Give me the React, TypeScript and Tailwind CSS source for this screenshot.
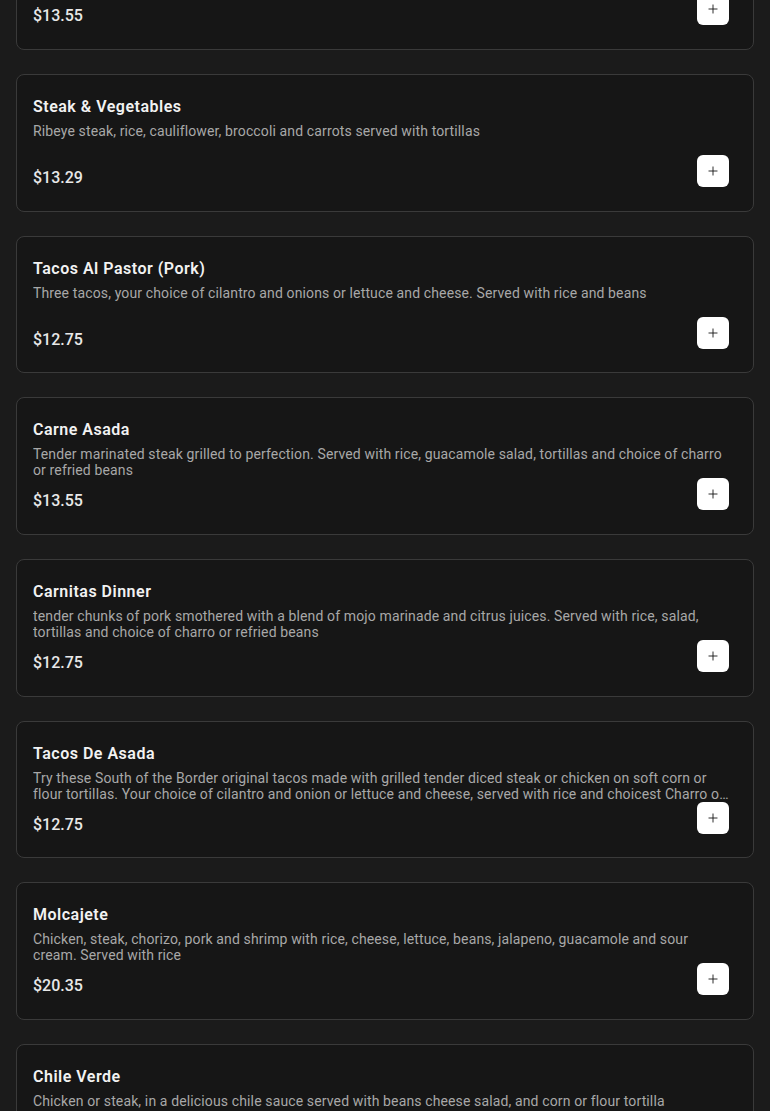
import { Plus } from "lucide-react"

interface Item {
  name: string
  description: string
  price: string
}

const items: Item[] = [
  { name: "Fajitas", description: "Sizzling fajitas served with rice, beans and tortillas", price: "$13.55" },
  { name: "Steak & Vegetables", description: "Ribeye steak, rice, cauliflower, broccoli and carrots served with tortillas", price: "$13.29" },
  { name: "Tacos Al Pastor (Pork)", description: "Three tacos, your choice of cilantro and onions or lettuce and cheese. Served with rice and beans", price: "$12.75" },
  { name: "Carne Asada", description: "Tender marinated steak grilled to perfection. Served with rice, guacamole salad, tortillas and choice of charro or refried beans", price: "$13.55" },
  { name: "Carnitas Dinner", description: "tender chunks of pork smothered with a blend of mojo marinade and citrus juices. Served with rice, salad, tortillas and choice of charro or refried beans", price: "$12.75" },
  { name: "Tacos De Asada", description: "Try these South of the Border original tacos made with grilled tender diced steak or chicken on soft corn or flour tortillas. Your choice of cilantro and onion or lettuce and cheese, served with rice and choicest Charro or refried beans", price: "$12.75" },
  { name: "Molcajete", description: "Chicken, steak, chorizo, pork and shrimp with rice, cheese, lettuce, beans, jalapeno, guacamole and sour cream. Served with rice", price: "$20.35" },
  { name: "Chile Verde", description: "Chicken or steak, in a delicious chile sauce served with beans cheese salad, and corn or flour tortilla", price: "$12.75" },
]

const MenuCard = ({ item }: { item: Item }) => {
  return (
    <div className="rounded-lg border border-[#3a3a3a] bg-[#161616] pl-4 pr-6 pt-5 pb-[20.67px]">
      <h3 className="text-base leading-6 font-semibold tracking-[0.5px] text-[#f2f2f2]">{item.name}</h3>
      <p className="mt-1 h-8 text-sm leading-4 tracking-[0.13px] text-[#a8a8a8] line-clamp-2">{item.description}</p>
      <div className="flex items-end justify-between">
        <span className="text-base leading-6 font-medium text-[#e8e8e8]">{item.price}</span>
        <button className="mb-[3px] flex h-8 w-8 items-center justify-center rounded-md bg-white text-[#111]">
          <Plus size={14} strokeWidth={1.5} />
        </button>
      </div>
    </div>
  )
}

export default function App() {
  return (
    <div className="min-h-screen overflow-hidden bg-[#1b1b1b]" style={{ fontFamily: "Roboto, 'Liberation Sans', sans-serif" }}>
      <div className="mt-[-87.67px] flex flex-col gap-6 px-4">
        {items.map((item) => (
          <MenuCard key={item.name} item={item} />
        ))}
      </div>
    </div>
  )
}
